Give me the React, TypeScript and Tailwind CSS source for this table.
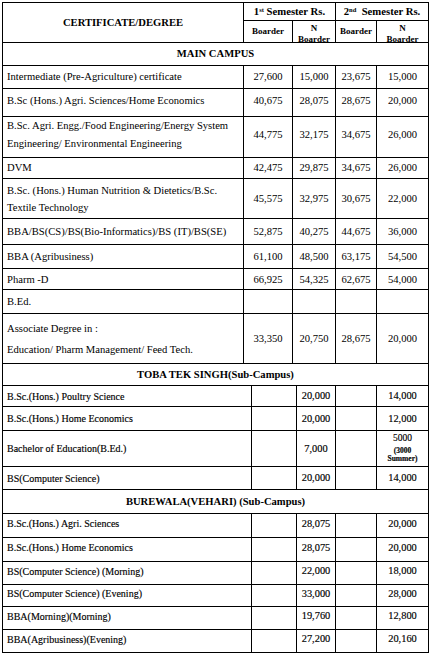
const serif = "font-['Liberation_Serif','Times_New_Roman',serif] text-black";

type MainRow = { label: string[]; vals: string[]; h: string; lead?: string; pad?: string };

const mainRows: MainRow[] = [
  { label: ['Intermediate (Pre-Agriculture) certificate'], vals: ['27,600', '15,000', '23,675', '15,000'], h: 'h-[23px]' },
  { label: ['B.Sc (Hons.) Agri. Sciences/Home Economics'], vals: ['40,675', '28,075', '28,675', '20,000'], h: 'h-[28px]', pad: 'pb-[4px]' },
  {
    label: ['B.Sc. Agri. Engg./Food Engineering/Energy System', 'Engineering/ Environmental Engineering'],
    vals: ['44,775', '32,175', '34,675', '26,000'],
    h: 'h-[41px]',
    lead: 'leading-[18px]',
    pad: 'pb-[5px]',
  },
  { label: ['DVM'], vals: ['42,475', '29,875', '34,675', '26,000'], h: 'h-[21px]' },
  {
    label: ['B.Sc. (Hons.) Human Nutrition & Dietetics/B.Sc.', 'Textile Technology'],
    vals: ['45,575', '32,975', '30,675', '22,000'],
    h: 'h-[40px]',
    lead: 'leading-[17px]',
  },
  { label: ['BBA/BS(CS)/BS(Bio-Informatics)/BS (IT)/BS(SE)'], vals: ['52,875', '40,275', '44,675', '36,000'], h: 'h-[26px]' },
  { label: ['BBA (Agribusiness)'], vals: ['61,100', '48,500', '63,175', '54,500'], h: 'h-[24px]' },
  { label: ['Pharm -D'], vals: ['66,925', '54,325', '62,675', '54,000'], h: 'h-[21px]', pad: 'pt-[2px]' },
  { label: ['B.Ed.'], vals: ['', '', '', ''], h: 'h-[24px]' },
  {
    label: ['Associate Degree in :', 'Education/ Pharm Management/ Feed Tech.'],
    vals: ['33,350', '20,750', '28,675', '20,000'],
    h: 'h-[50px]',
    lead: 'leading-[21px]',
  },
];

type SubRow = { label: string; first: string; second: React.ReactNode; h: string };

const tobaRows: SubRow[] = [
  { label: 'B.Sc.(Hons.) Poultry Science', first: '20,000', second: '14,000', h: 'h-[21px]' },
  { label: 'B.Sc.(Hons.) Home Economics', first: '20,000', second: '12,000', h: 'h-[24px]' },
  {
    label: 'Bachelor of Education(B.Ed.)',
    first: '7,000',
    second: (
      <div className="flex flex-col items-center leading-none">
        <span className="text-[9.5px]">5000</span>
        <span className="mt-[3px] text-[7.5px] font-bold">(3000</span>
        <span className="mt-[1px] text-[7.5px] font-bold">Summer)</span>
      </div>
    ),
    h: 'h-[36px]',
  },
  { label: 'BS(Computer Science)', first: '20,000', second: '14,000', h: 'h-[23px]' },
];

const burewalaRows: SubRow[] = [
  { label: 'B.Sc.(Hons.) Agri. Sciences', first: '28,075', second: '20,000', h: 'h-[24px]' },
  { label: 'B.Sc.(Hons.) Home Economics', first: '28,075', second: '20,000', h: 'h-[24px]' },
  { label: 'BS(Computer Science) (Morning)', first: '22,000', second: '18,000', h: 'h-[23px]' },
  { label: 'BS(Computer Science) (Evening)', first: '33,000', second: '28,000', h: 'h-[22px]' },
  { label: 'BBA(Morning)(Morning)', first: '19,760', second: '12,800', h: 'h-[23px]' },
  { label: 'BBA(Agribusiness)(Evening)', first: '27,200', second: '20,160', h: 'h-[23px]' },
];

const cell = 'border-r border-b border-black flex items-center';

function SectionTitle({ title, h }: { title: string; h: string }) {
  return (
    <div className={`${cell} ${h} col-span-5 justify-center text-[10.6px] font-bold`}>{title}</div>
  );
}

function SubSection({ title, rows, titleH, pad }: { title: string; rows: SubRow[]; titleH: string; pad?: string }) {
  return (
    <div className="grid grid-cols-[249px_45px_39px_41px_52px]">
      <SectionTitle title={title} h={titleH} />
      {rows.map((r, i) => (
        <div key={i} className="contents">
          <div className={`${cell} ${r.h} ${pad ?? ''} pl-[4px] text-[10px] [-webkit-text-stroke:0.15px_black]`}>{r.label}</div>
          <div className={`${cell} ${r.h}`} />
          <div className={`${cell} ${r.h} ${pad ?? ''} justify-center text-[10.4px] [-webkit-text-stroke:0.15px_black]`}>{r.first}</div>
          <div className={`${cell} ${r.h}`} />
          <div className={`${cell} ${r.h} ${pad ?? ''} justify-center text-[10.4px] [-webkit-text-stroke:0.15px_black]`}>{r.second}</div>
        </div>
      ))}
    </div>
  );
}

export default function App() {
  return (
    <div className={`min-h-screen bg-white ${serif}`}>
      <div className="ml-[2px] mt-[2px] w-[427px] border-l border-t border-black">
        {/* header */}
        <div className="grid grid-cols-[241px_49px_43px_41px_52px] grid-rows-[18px_22px]">
          <div className={`${cell} row-span-2 justify-center text-[10.6px] font-bold`}>CERTIFICATE/DEGREE</div>
          <div className={`${cell} col-span-2 justify-center text-[10.7px] font-bold`}>
            <span>
              1<sup className="text-[6.5px]">st</sup> Semester Rs.
            </span>
          </div>
          <div className={`${cell} col-span-2 justify-center text-[10.7px] font-bold`}>
            <span className="whitespace-pre">
              2<sup className="text-[6.5px]">nd</sup>  Semester Rs.
            </span>
          </div>
          <div className={`${cell} justify-center pt-[1px] text-[9px] font-bold`}>Boarder</div>
          <div className="border-r border-b border-black flex flex-col items-center pt-[2px] text-[9px] font-bold leading-[11px]">
            <span>N</span>
            <span>Boarder</span>
          </div>
          <div className={`${cell} justify-center pt-[1px] text-[9px] font-bold`}>Boarder</div>
          <div className="border-r border-b border-black flex flex-col items-center pt-[2px] text-[9px] font-bold leading-[11px]">
            <span>N</span>
            <span>Boarder</span>
          </div>
        </div>

        {/* main campus */}
        <div className="grid grid-cols-[241px_49px_43px_41px_52px]">
          <SectionTitle title="MAIN CAMPUS" h="h-[23px]" />
          {mainRows.map((r, i) => (
            <div key={i} className="contents">
              <div className={`${cell} ${r.h} ${r.pad ?? ''} pl-[4px] text-[10.6px]`}>
                <div className={`flex flex-col whitespace-nowrap ${r.lead ?? ''}`}>
                  {r.label.map((l) => (
                    <span key={l}>{l}</span>
                  ))}
                </div>
              </div>
              {r.vals.map((v, j) => (
                <div key={j} className={`${cell} ${r.h} ${r.pad ?? ''} justify-center text-[10.6px]`}>
                  {v}
                </div>
              ))}
            </div>
          ))}
        </div>

        <SubSection title="TOBA TEK SINGH(Sub-Campus)" rows={tobaRows} titleH="h-[22px]" />
        <SubSection title="BUREWALA(VEHARI) (Sub-Campus)" rows={burewalaRows} titleH="h-[24px]" pad="pb-[4px]" />
      </div>
    </div>
  );
}
